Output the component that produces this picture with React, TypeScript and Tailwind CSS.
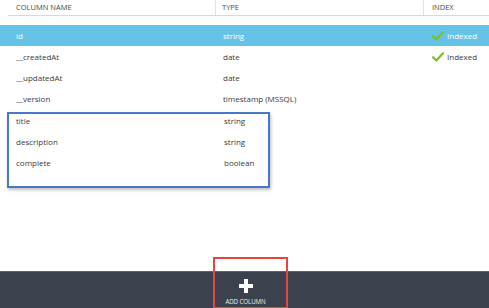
import type { ReactNode } from "react";

type Col = { name: string; type: string; indexed?: boolean };

const system: Col[] = [
  { name: "__createdAt", type: "date", indexed: true },
  { name: "__updatedAt", type: "date" },
  { name: "__version", type: "timestamp (MSSQL)" },
];

const custom: Col[] = [
  { name: "title", type: "string" },
  { name: "description", type: "string" },
  { name: "complete", type: "boolean" },
];

function Check({ className = "" }: { className?: string }) {
  return (
    <svg width="12" height="10" viewBox="0 0 12 10" className={className}>
      <path d="M1 5.2 L4.3 8.6 L11 1.3" fill="none" stroke="#7cbf2a" strokeWidth="2.2" strokeLinecap="round" strokeLinejoin="round" />
    </svg>
  );
}

function Row({ col, selected, children }: { col: Col; selected?: boolean; children?: ReactNode }) {
  return (
    <div
      className={`flex items-center h-[21px] pl-2 ${selected ? "bg-[#66c3e8] text-white" : "text-[#3a3a3a]"}`}
    >
      <div className="w-[208px] pl-2">{col.name}</div>
      <div className="w-[208px] pl-[7px]">{col.type}</div>
      <div className="flex items-center gap-[3px] pl-2">
        {col.indexed && (
          <>
            <Check />
            <span>Indexed</span>
          </>
        )}
      </div>
      {children}
    </div>
  );
}

export default function App() {
  return (
    <div
      className="w-[489px] h-[308px] bg-white flex flex-col text-[8px] overflow-hidden"
      style={{ fontFamily: '"Open Sans", "Noto Sans", sans-serif' }}
    >
      <div className="flex-1 flex flex-col">
        <div className="flex h-4 ml-2 border-b border-[#d9d9d9] text-[#4a4a4a] text-[7.5px]">
          <div className="w-[208px] pl-2 pt-[2px] border-r border-[#e3e3e3]">COLUMN NAME</div>
          <div className="w-[208px] pl-[6px] pt-[2px] border-r border-[#e3e3e3]">TYPE</div>
          <div className="pl-2 pt-[2px]">INDEX</div>
        </div>
        <div className="h-[9px]" />
        <Row col={{ name: "id", type: "string", indexed: true }} selected />
        {system.map((c) => (
          <Row key={c.name} col={c} />
        ))}
        <div className="ml-[7px] w-[263px] h-[76px] mt-[3px] border-2 border-[#4a78c8] shadow-[1px_2px_3px_rgba(0,0,0,0.25)]">
          <div className="-mt-[4px]">
            {custom.map((c) => (
              <div key={c.name} className="flex items-center h-[21px] text-[#3a3a3a]">
                <div className="w-[215px] pl-[7px]">{c.name}</div>
                <div>{c.type}</div>
              </div>
            ))}
          </div>
        </div>
      </div>
      <div className="h-[37px] bg-[#3b424d] border-t border-[#5c636d] flex justify-center relative">
        <div className="absolute left-[213px] -top-[15px] w-[75px] h-[52px] border-2 border-[#e8453c]" />
        <div className="flex flex-col items-center pt-[7px] ml-[2px]">
          <svg width="14" height="14" viewBox="0 0 14 14">
            <rect x="5" y="0" width="4" height="14" fill="#fff" />
            <rect x="0" y="5" width="14" height="4" fill="#fff" />
          </svg>
          <span className="text-[6.2px] text-[#e6eef5] mt-[4px] tracking-[-0.1px]">ADD COLUMN</span>
        </div>
      </div>
    </div>
  );
}
